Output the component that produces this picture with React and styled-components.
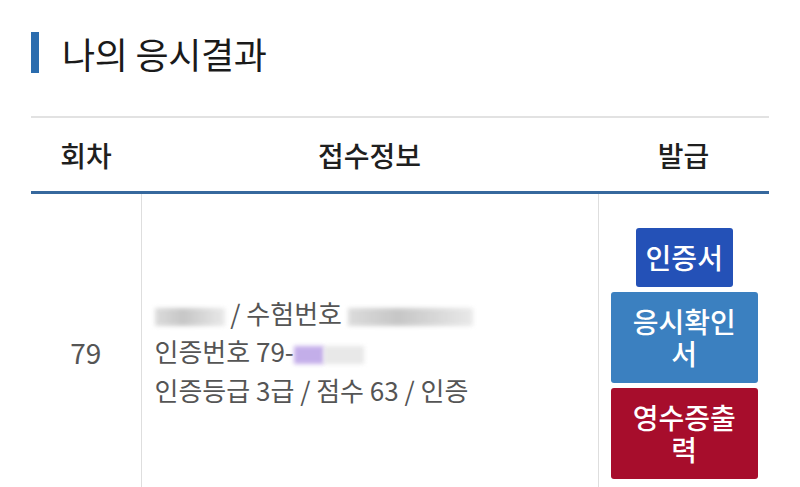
import React from 'react';
import styled, { createGlobalStyle } from 'styled-components';

const GlobalStyle = createGlobalStyle`
  html, body {
    margin: 0;
    padding: 0;
    background: #fff;
    overflow: hidden;
  }
  body {
    font-family: "Noto Sans CJK KR", "Noto Sans", sans-serif;
  }
`;

const Page = styled.div`
  padding: 32px 31px 0;
`;

const Title = styled.h2`
  display: flex;
  align-items: center;
  margin: 0 0 43px;
  height: 41px;
  font-size: 36px;
  font-weight: 400;
  color: #1a1a1a;
  letter-spacing: -0.3px;

  &::before {
    content: '';
    display: block;
    width: 8px;
    height: 41px;
    margin-right: 23px;
    background: #2a6cae;
  }
`;

const Table = styled.table`
  width: 100%;
  border-collapse: collapse;
  table-layout: fixed;
  border-top: 2px solid #e2e2e2;
`;

const Th = styled.th`
  height: 73px;
  padding: 0;
  font-size: 28px;
  font-weight: 500;
  color: #1f1f1f;
  text-align: center;
  border-bottom: 3px solid #36689d;
`;

const Td = styled.td`
  padding: ${({ $pad }) => $pad || '0'};
  vertical-align: middle;
  text-align: ${({ $align }) => $align || 'center'};
  font-size: ${({ $size }) => $size || '26px'};
  line-height: 38.5px;
  color: #555;
  white-space: nowrap;
  border-left: ${({ $first }) => ($first ? 'none' : '1px solid #dedede')};
`;

const Blur = styled.span`
  display: inline-block;
  width: ${({ $w }) => $w}px;
  height: 18px;
  vertical-align: -2px;
  background: ${({ $bg }) => $bg || 'linear-gradient(90deg, #d6d6d6, #bdbdbd 40%, #e6e6e6)'};
  filter: blur(2px);
  opacity: 0.85;
`;

const Actions = styled.div`
  display: flex;
  flex-direction: column;
  align-items: center;
  gap: 5px;
  white-space: normal;
`;

const IssueButton = styled.button`
  width: ${({ $full }) => ($full ? '100%' : 'auto')};
  max-width: 100%;
  padding: 13px 10px;
  border: none;
  border-radius: 3px;
  background: ${({ $color }) => $color};
  color: #fff;
  font-family: inherit;
  font-size: 28px;
  font-weight: 500;
  line-height: 32.5px;
  text-align: center;
  overflow-wrap: anywhere;
  cursor: pointer;
`;

const App = () => (
  <>
    <GlobalStyle />
    <Page>
      <Title>나의 응시결과</Title>
      <Table>
        <colgroup>
          <col style={{ width: 110 }} />
          <col style={{ width: 457 }} />
          <col style={{ width: 171 }} />
        </colgroup>
        <thead>
          <tr>
            <Th>회차</Th>
            <Th>접수정보</Th>
            <Th>발급</Th>
          </tr>
        </thead>
        <tbody>
          <tr>
            <Td $first $size="28px" $pad="0 0 4px">79</Td>
            <Td $align="left" $pad="0 10px 6px 13px">
              <div>
                <Blur $w={70} /> / 수험번호 <Blur $w={125} />
              </div>
              <div>
                인증번호 79-
                <Blur $w={30} $bg="#b9a0e6" />
                <Blur $w={40} $bg="#e4e4e4" />
              </div>
              <div>인증등급 3급 / 점수 63 / 인증</div>
            </Td>
            <Td $pad="34px 11px 36px 12px">
              <Actions>
                <IssueButton $color="#2451b7">인증서</IssueButton>
                <IssueButton $full $color="#3b80c0">응시확인서</IssueButton>
                <IssueButton $full $color="#a70d2c">영수증출력</IssueButton>
              </Actions>
            </Td>
          </tr>
        </tbody>
      </Table>
    </Page>
  </>
);

export default App;
